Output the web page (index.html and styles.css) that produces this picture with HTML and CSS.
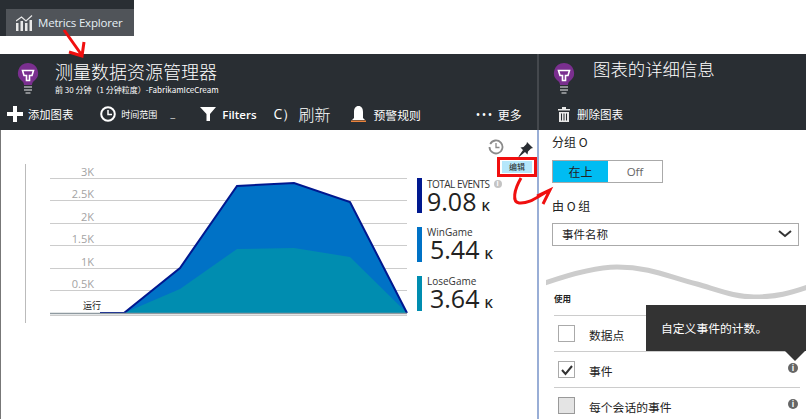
FILE: index.html
```html
<!DOCTYPE html>
<html lang="zh">
<head>
<meta charset="utf-8">
<title>Metrics Explorer</title>
<link rel="stylesheet" href="styles.css">
</head>
<body>
<header class="strip">
  <div class="tab">
    <svg class="tab-icon" width="17" height="16" viewBox="0 0 17 16"><g fill="#e8e8e8"><rect x="0" y="8" width="2.5" height="8"/><rect x="4.5" y="6" width="2.5" height="10"/><rect x="9" y="8" width="2.5" height="8"/><rect x="13.5" y="5" width="2.5" height="11"/></g><path d="M0 6 5.5 2 10 6 16 0.5" fill="none" stroke="#e8e8e8" stroke-width="1.2"/></svg>
    <span>Metrics Explorer</span>
  </div>
</header>
<main class="app">
  <section class="panel left">
    <div class="head">
      <div class="title-row">
        <svg class="bulb" width="22" height="34" viewBox="0 0 22 34"><path d="M11 1a10 10 0 0 0-6 18c1.300 1 2 2.500 2 4h8c0-1.500.7-3 2-4a10 10 0 0 0-6-18z" fill="#7a2f8f"/><path d="M5.500 8.500h11l-1.500 5h-2.500v5h-3v-5H7z" fill="none" stroke="#fff" stroke-width="1.600"/><g fill="#8a8d90"><rect x="7" y="24" width="8" height="2"/><rect x="7" y="27" width="8" height="2"/><rect x="8.500" y="30" width="5" height="2"/></g></svg>
        <div class="titles">
          <h1>测量数据资源管理器</h1>
          <p class="sub">前 30 分钟（1 分钟粒度）-FabrikamIceCream</p>
        </div>
      </div>
      <nav class="toolbar">
        <span class="tool t-add"><svg width="16" height="16" viewBox="0 0 16 16"><path d="M6 0h4v6h6v4h-6v6H6v-6H0V6h6z" fill="#fff"/></svg><span>添加图表</span></span>
        <span class="tool t-time"><svg width="16" height="16" viewBox="0 0 16 16"><circle cx="8" cy="8" r="6.800" fill="none" stroke="#fff" stroke-width="2"/><path d="M8 4v4.500h4" fill="none" stroke="#fff" stroke-width="1.500"/></svg><span class="small">时间范围</span><span class="dash">_</span></span>
        <span class="tool t-filter"><svg width="16" height="14" viewBox="0 0 16 14"><path d="M0 0h16L10 7v7H6.500V7z" fill="#fff"/></svg><b>Filters</b></span>
        <span class="tool t-refresh"><span class="c">C）</span><span class="big">刷新</span></span>
        <span class="tool t-bell"><svg width="15" height="17" viewBox="0 0 15 17"><path d="M7.500 0C10.500 0 12 2.500 12 6v6l2 2H1l2-2V6C3 2.500 4.500 0 7.500 0z" fill="#fff"/><rect x="0" y="14.500" width="15" height="1.500" fill="#e8823c"/></svg><span>预警规则</span></span>
        <span class="tool t-more"><span class="dots">•••</span><span>更多</span></span>
      </nav>
    </div>
    <div class="canvas">
      <div class="chart-tools">
        <div class="tool-icons">
          <svg width="16" height="16" viewBox="0 0 16 16"><path d="M2.200 5A6.500 6.500 0 1 1 1.500 8" fill="none" stroke="#8a8a8a" stroke-width="1.800"/><path d="M8 4v4.500h3.500" fill="none" stroke="#8a8a8a" stroke-width="1.300"/></svg>
          <svg class="pin" width="15" height="15" viewBox="0 0 15 15"><path d="M9 0l6 6-2 .5-3 3-.5 3L7 10 1 15l-.5-.5L5 8 2.500 5.500l3-.5 3-3z" fill="#2a2e33"/></svg>
        </div>
        <div class="edit"><span>编辑</span></div>
      </div>
      <div class="chart-row">
        <svg class="chart" width="411" height="160" viewBox="1 164 411 160">
          <path class="axis" d="M25.500 164V323"/>
          <g class="grid">
            <path d="M50 178.500H407M50 200.500H407M50 223.500H407M50 245.500H407M50 268.500H407M50 290.500H407M50 315.500H407"/>
          </g>
          <g class="ylab">
            <text x="94" y="176">3K</text><text x="94" y="198">2.5K</text><text x="94" y="221">2K</text><text x="94" y="243">1.5K</text><text x="94" y="266">1K</text><text x="94" y="288">0.5K</text>
          </g>
          <text class="run" x="83" y="309">运行</text>
          <path d="M124 313 180 268 237 186 294 183 350 202 407 313z" fill="#0072c6"/>
          <path d="M124 313 180 289 237 249 294 248 350 257 407 313z" fill="#008db0"/>
          <path d="M100 313H124L180 268 237 186 294 183 350 202 407 313" fill="none" stroke="#00188f" stroke-width="2"/>
          <path d="M50 313.500H407" stroke="#8f9aa0" stroke-width="1.500"/>
        </svg>
        <div class="legend">
          <div class="metric m1"><div class="m-name"><span class="tot">TOTAL EVENTS</span> <i class="info-l">i</i></div><div class="m-val">9.08<small>K</small></div></div>
          <div class="metric m2"><div class="m-name">WinGame</div><div class="m-val">5.44<small>K</small></div></div>
          <div class="metric m3"><div class="m-name">LoseGame</div><div class="m-val">3.64<small>K</small></div></div>
        </div>
      </div>
    </div>
  </section>
  <section class="panel right">
    <div class="head">
      <div class="title-row r">
        <svg class="bulb" width="22" height="34" viewBox="0 0 22 34"><path d="M11 1a10 10 0 0 0-6 18c1.300 1 2 2.500 2 4h8c0-1.500.7-3 2-4a10 10 0 0 0-6-18z" fill="#7a2f8f"/><path d="M5.500 8.500h11l-1.500 5h-2.500v5h-3v-5H7z" fill="none" stroke="#fff" stroke-width="1.600"/><g fill="#8a8d90"><rect x="7" y="24" width="8" height="2"/><rect x="7" y="27" width="8" height="2"/><rect x="8.500" y="30" width="5" height="2"/></g></svg>
        <h2>图表的详细信息</h2>
      </div>
      <nav class="toolbar r">
        <span class="tool"><svg width="12" height="15" viewBox="0 0 12 15"><path d="M0 2h4V0h4v2h4v1.500H0zM1 5h10v10H1z" fill="#e8e8e8"/><path d="M3.500 6.500v7M6 6.500v7M8.500 6.500v7" stroke="#292e33"/></svg><span>删除图表</span></span>
      </nav>
    </div>
    <div class="form">
      <div class="lbl l1">分组 O</div>
      <div class="toggle"><span class="on">在上</span><span class="off">Off</span></div>
      <div class="lbl l2">由 O 组</div>
      <div class="select"><span>事件名称</span><svg width="14" height="8" viewBox="0 0 14 8"><path d="M1 1l6 5 6-5" fill="none" stroke="#333" stroke-width="2"/></svg></div>
      <svg class="wave" width="262" height="39" viewBox="0 0 262 39"><path d="M-1 23C25 14 50 7 71 7 105 7 125 18 151 24 175 31 190 37 208 37 230 37 245 33 262 27" fill="none" stroke="#cccccc" stroke-width="5"/></svg>
      <div class="use">使用</div>
      <div class="rows">
        <div class="row"><span class="box"></span><span class="cap">数据点</span></div>
        <div class="row"><span class="box"><svg width="14" height="12" viewBox="0 0 14 12"><path d="M2 6l3.500 4L12 2" fill="none" stroke="#333" stroke-width="2"/></svg></span><span class="cap">事件</span><i class="info">i</i></div>
        <div class="row"><span class="box dis"></span><span class="cap">每个会话的事件</span><i class="info">i</i></div>
      </div>
      <div class="tip">自定义事件的计数。</div>
    </div>
  </section>
  <svg class="marks" width="806" height="419" viewBox="0 0 806 419">
    <g fill="none" stroke="#f00f0f">
      <path d="M64 30 81 54M69 52 82 56 84 42" stroke-width="3"/>
      <rect x="498.500" y="158.500" width="37" height="17" stroke-width="3"/>
      <path d="M521 178C514 190 512 202 519 203 530 204 538 196 550 190M537 196 550 190 543 204" stroke-width="3"/>
    </g>
  </svg>
</main>
</body>
</html>
```
FILE: styles.css
```css
* { box-sizing: border-box; }
html, body { margin: 0; padding: 0; }
body {
  width: 806px;
  height: 419px;
  overflow: hidden;
  background: #fff;
  position: relative;
  font-family: "Noto Sans CJK SC", "Noto Sans", sans-serif;
  color: #222;
}
.strip {
  width: 134px;
  height: 36px;
  margin-bottom: 18px;
  background: #292e33;
  padding: 9px 0 0 6px;
}
.tab {
  height: 27px;
  background: #505459;
  display: flex;
  align-items: center;
  gap: 5px;
  padding-left: 10px;
  color: #e6f0f5;
  font: 11.5px "Open Sans", sans-serif;
}
.tab-icon { flex: none; }
.tab span { letter-spacing: -0.2px; white-space: nowrap; }
.app {
  display: grid;
  grid-template-columns: 537px 269px;
  height: 365px;
}
.panel { display: flex; flex-direction: column; min-width: 0; }
.head {
  height: 76px;
  background: #292e33;
  color: #fff;
  flex: none;
}
.right .head { border-left: 2px solid #44484d; }
.title-row {
  height: 44px;
  display: flex;
  padding: 7px 0 0 17px;
  gap: 16px;
}
.title-row.r { padding-left: 14px; gap: 18px; }
.bulb { flex: none; margin-top: 1px; }
.titles { margin-top: -2px; }
h1 {
  margin: 0;
  font-size: 18px;
  line-height: 24px;
  font-weight: 300;
}
.sub {
  margin: 1px 0 0;
  font-size: 8px;
  line-height: 11px;
  white-space: nowrap;
}
h2 {
  margin: -4px 0 0;
  font-size: 17.400px;
  line-height: 24px;
  font-weight: 300;
}
.toolbar {
  display: flex;
  align-items: center;
  height: 32px;
  padding-left: 7px;
  font-size: 11.300px;
}
.toolbar.r { padding-left: 19px; font-size: 11.500px; }
.tool { display: flex; align-items: center; gap: 5px; white-space: nowrap; }
.toolbar.r .tool { gap: 7px; }
.t-time { margin-left: 27px; }
.small { font-size: 9px; }
.dash { font-size: 9px; margin-left: 8px; }
.t-filter { margin-left: 25px; gap: 6px; }
.t-filter b { font: 600 11.500px "Open Sans", sans-serif; }
.t-refresh { margin-left: 17px; gap: 0; }
.c { font: 14px "Open Sans", sans-serif; width: 25px; white-space: nowrap; }
.big { font-size: 16px; font-weight: 300; }
.t-bell { margin-left: 20px; gap: 8px; font-size: 11.800px; }
.t-more { margin-left: 55px; gap: 4px; font-size: 12px; }
.dots { font: 12px "Open Sans", sans-serif; letter-spacing: 1.500px; }
.canvas { flex: 1; min-height: 0; border-left: 1px solid #777; border-bottom: 2px solid #777; }
.chart-tools {
  height: 34px;
  display: flex;
  flex-direction: column;
  align-items: flex-end;
  padding: 9px 3px 0 0;
}
.tool-icons { display: flex; gap: 14px; height: 22px; padding-right: 1px; flex: none; }
.pin { margin-top: 3px; }
.edit {
  width: 30px;
  height: 12px;
  flex: none;
  margin-right: 2px;
  background: #b5e7fb;
  text-align: center;
  font-size: 8px;
  line-height: 12px;
  color: #222;
}
.chart-row { display: flex; }
.chart { flex: none; display: block; }
.axis { stroke: #bbb; fill: none; }
.grid path { stroke: #cccccc; fill: none; }
.ylab text {
  font: 11px "Open Sans", sans-serif;
  fill: #a3a3a3;
  text-anchor: end;
}
.run { font-size: 9px; fill: #222; }
.legend {
  margin: 14px 0 0 5px;
  display: flex;
  flex-direction: column;
  gap: 14px;
}
.metric {
  height: 35px;
  border-left: 5px solid;
  padding-left: 5px;
  font-family: "Open Sans", sans-serif;
  white-space: nowrap;
}
.m1 { border-color: #00188f; }
.m2 { border-color: #0072c6; }
.m3 { border-color: #008db0; }
.m-name {
  display: flex;
  align-items: center;
  gap: 4px;
  height: 12px;
  font-size: 10px;
  line-height: 12px;
  color: #333;
}
.m2 .m-name, .m3 .m-name { margin-top: -1px; }
.tot { letter-spacing: -0.5px; }
.m-val {
  font-size: 25px;
  line-height: 23px;
  color: #222;
}
.m2 .m-val, .m3 .m-val { padding-left: 3px; }
.m-val small { font-size: 13px; font-weight: 600; margin-left: 5px; }
.info-l {
  width: 8px;
  height: 8px;
  border-radius: 50%;
  background: #c4c4c4;
  color: #fff;
  font: 700 7px/8px "Open Sans", sans-serif;
  text-align: center;
}
.form {
  position: relative;
  flex: 1;
  padding: 0 7px 0 13px;
  min-height: 0;
  overflow: hidden;
  border-left: 2px solid #99aed6;
  border-bottom: 2px solid #777;
}
.lbl { font-size: 12px; line-height: 16px; color: #222; }
.l1 { margin-top: 4px; }
.toggle {
  display: flex;
  width: 111px;
  height: 23px;
  margin-top: 10px;
  border: 1px solid #aaa;
  font-size: 12px;
  line-height: 21px;
  text-align: center;
}
.on { width: 55px; background: #00bcf2; color: #222; }
.off { flex: 1; color: #666; font-family: "Open Sans", sans-serif; font-size: 11.500px; }
.l2 { margin-top: 15px; }
.select {
  display: flex;
  align-items: center;
  justify-content: space-between;
  width: 247px;
  height: 23px;
  margin-top: 9px;
  border: 1px solid #aaa;
  padding: 0 6px 2px 9px;
  font-size: 11.500px;
}
.wave { display: block; margin: 14px 0 0 -6px; }
.use { font-size: 8.500px; font-weight: 700; line-height: 12px; margin: -7px 0 0 2px; height: 23px; }
.rows { margin-left: 2px; width: 246px; }
.row {
  display: flex;
  align-items: center;
  gap: 14px;
  height: 36px;
  border-top: 1px solid #ccc;
  padding-left: 4px;
  font-size: 11.800px;
  position: relative;
}
.cap { padding-top: 2px; }
.box {
  width: 17px;
  height: 17px;
  border: 1px solid #aaa;
  display: flex;
  align-items: center;
  justify-content: center;
  flex: none;
}
.dis { background: #e4e4e4; border-color: #999; }
.info {
  position: absolute;
  right: 2px;
  top: 11px;
  width: 10px;
  height: 10px;
  border-radius: 50%;
  background: #666;
  color: #fff;
  font: 700 8px/10px "Open Sans", sans-serif;
  text-align: center;
}
.tip {
  position: absolute;
  top: 175px;
  right: 0;
  width: 160px;
  height: 46px;
  background: #333;
  color: #fff;
  font-size: 11.800px;
  line-height: 46px;
  padding-left: 15px;
}
.tip::after {
  content: "";
  position: absolute;
  right: 1px;
  top: 46px;
  border: 10px solid transparent;
  border-bottom: 0;
  border-top-color: #333;
}
.marks { position: absolute; left: 0; top: 0; pointer-events: none; }
```
